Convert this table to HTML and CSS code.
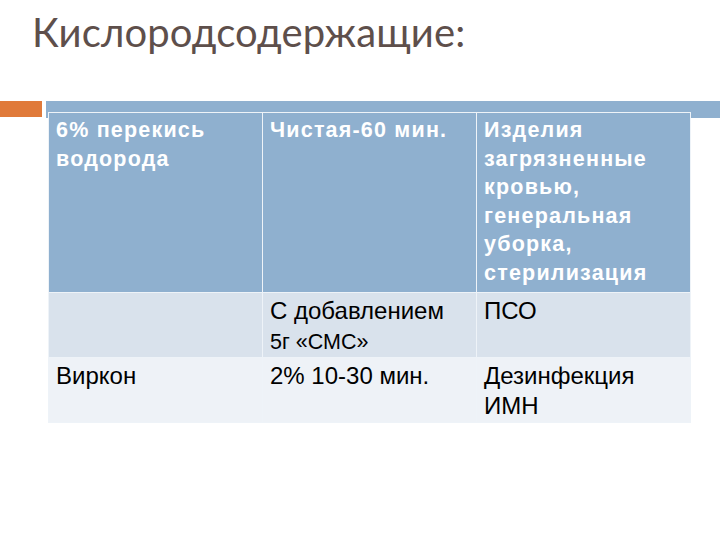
FILE: index.html
```html
<!DOCTYPE html>
<html lang="ru">
<head>
<meta charset="utf-8">
<link rel="stylesheet" href="styles.css">
</head>
<body>
<div class="slide">
  <h1 class="title">Кислородсодержащие:</h1>
  <div class="decor">
    <div class="accent"></div>
    <div class="band"></div>
  </div>
  <div class="table-wrap">
    <table class="grid">
      <tr class="row-head">
        <td>6% перекись водорода</td>
        <td>Чистая-60 мин.</td>
        <td>Изделия загрязненные кровью, генеральная уборка, стерилизация</td>
      </tr>
      <tr class="row-a">
        <td></td>
        <td>С добавлением<br><span class="small">5г «СМС»</span></td>
        <td>ПСО</td>
      </tr>
      <tr class="row-b">
        <td>Виркон</td>
        <td>2% 10-30 мин.</td>
        <td>Дезинфекция ИМН</td>
      </tr>
    </table>
  </div>
</div>
</body>
</html>
```
FILE: styles.css
```css
html, body {
  margin: 0;
  padding: 0;
  background: #ffffff;
}
.slide {
  width: 720px;
  height: 540px;
  overflow: hidden;
}
.title {
  margin: 0;
  padding: 8px 0 0 32px;
  height: 92px;
  box-sizing: border-box;
  font-family: Lato, "Open Sans", sans-serif;
  font-weight: 400;
  font-size: 40px;
  line-height: 48px;
  color: #5e4f4b;
  letter-spacing: 0.1px;
}
.decor {
  display: flex;
  gap: 4px;
  margin-top: 9px;
  height: 17px;
}
.accent {
  width: 42px;
  height: 16px;
  background: #e07a3a;
}
.band {
  flex: 1;
  height: 17px;
  background: #8fb0cf;
}
.table-wrap {
  position: relative;
  margin-top: -6px;
  padding-left: 48px;
}
.grid {
  border-collapse: collapse;
  table-layout: fixed;
  width: 642px;
  font-family: "Liberation Sans", Arial, sans-serif;
}
.grid td {
  width: 214px;
  vertical-align: top;
  border: 1px solid #eef3f8;
  padding: 3px 4px 0 7px;
  box-sizing: border-box;
}
.row-head td {
  background: #8fb0cf;
  color: #ffffff;
  font-weight: bold;
  font-size: 21.5px;
  line-height: 28.6px;
  letter-spacing: 1.2px;
  height: 180px;
}
.row-a td,
.row-b td {
  color: #000000;
  font-size: 24px;
  line-height: 30px;
  padding-top: 3px;
}
.row-a td {
  background: #d9e2ec;
  height: 65px;
}
.row-b td {
  background: #eef2f7;
  height: 65px;
}
.small {
  font-size: 21.5px;
}
```
